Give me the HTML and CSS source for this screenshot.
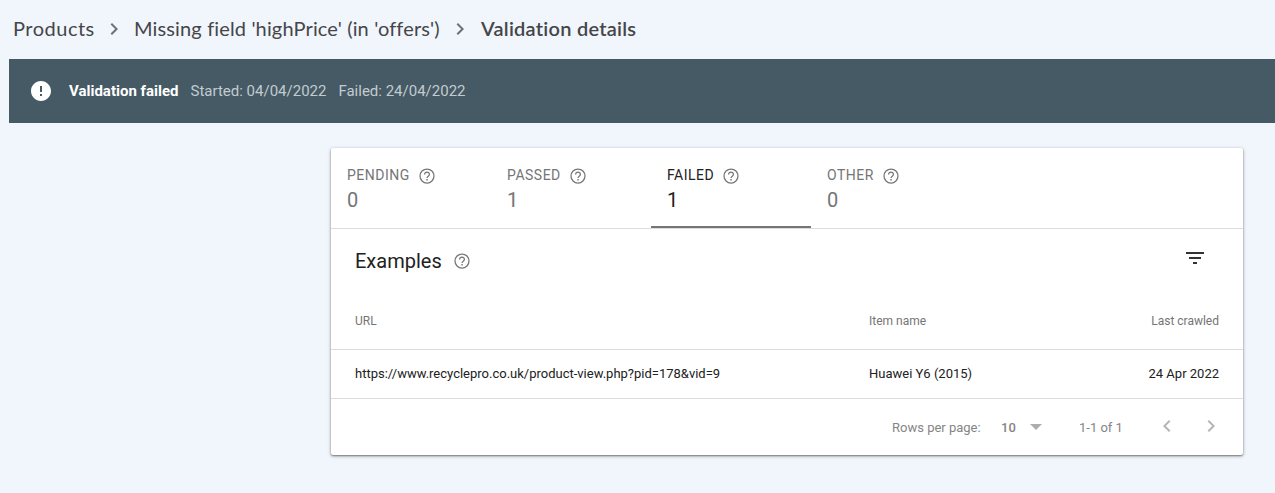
FILE: index.html
```
<!DOCTYPE html>
<html lang="en">
<head>
<meta charset="utf-8">
<title>Validation details</title>
<link rel="stylesheet" href="styles.css">
</head>
<body>
<svg class="defs" width="0" height="0" aria-hidden="true">
  <symbol id="help" viewBox="0 0 18 18"><g fill="none" stroke="currentColor" stroke-width="1.25"><circle cx="9" cy="9" r="7"/><path d="M6.600 7.500a2.400 2.400 0 1 1 4.800 0c0 1.700-2.400 1.700-2.400 3.600"/></g><path d="M8.300 12h1.400v1.400H8.300z"/></symbol>
  <symbol id="right" viewBox="0 0 24 24"><path d="M10 6L8.590 7.410 13.170 12l-4.580 4.590L10 18l6-6z"/></symbol>
  <symbol id="left" viewBox="0 0 24 24"><path d="M15.410 7.410L14 6l-6 6 6 6 1.410-1.410L10.830 12z"/></symbol>
</svg>
<nav class="crumbs">
  <span class="crumb crumb-root">Products</span>
  <svg class="sep"><use href="#right"/></svg>
  <span class="crumb crumb-issue">Missing field 'highPrice' (in 'offers')</span>
  <svg class="sep"><use href="#right"/></svg>
  <span class="crumb crumb-current">Validation details</span>
</nav>
<section class="banner">
  <svg class="alert" viewBox="0 0 24 24"><path d="M12 2C6.480 2 2 6.480 2 12s4.480 10 10 10 10-4.480 10-10S17.520 2 12 2zm1 15h-2v-2h2v2zm0-4h-2V7h2v6z"/></svg>
  <strong>Validation failed</strong>
  <span>Started: 04/04/2022</span>
  <span>Failed: 24/04/2022</span>
</section>
<main class="card">
  <div class="tabs">
    <div class="tab"><div class="label"><span>PENDING</span><svg class="help"><use href="#help"/></svg></div><div class="count">0</div></div>
    <div class="tab"><div class="label"><span>PASSED</span><svg class="help"><use href="#help"/></svg></div><div class="count">1</div></div>
    <div class="tab active"><div class="label"><span>FAILED</span><svg class="help"><use href="#help"/></svg></div><div class="count">1</div></div>
    <div class="tab"><div class="label"><span>OTHER</span><svg class="help"><use href="#help"/></svg></div><div class="count">0</div></div>
  </div>
  <header class="title">
    <h2>Examples</h2><svg class="help"><use href="#help"/></svg>
    <svg class="filter" viewBox="0 0 24 24"><path d="M10 18h4v-2h-4v2zM3 6v2h18V6H3zm3 7h12v-2H6v2z"/></svg>
  </header>
  <div class="row head"><span>URL</span><span>Item name</span><span class="date">Last crawled</span></div>
  <div class="row data"><span class="url">https://www.recyclepro.co.uk/product-view.php?pid=178&amp;vid=9</span><span class="name">Huawei Y6 (2015)</span><span class="date">24 Apr 2022</span></div>
  <footer class="pager">
    <span class="per-page">Rows per page:</span>
    <span class="size">10</span>
    <svg class="caret" viewBox="0 0 12 6"><path d="M0 0h12L6 6z"/></svg>
    <span class="range">1-1 of 1</span>
    <svg class="page prev"><use href="#left"/></svg>
    <svg class="page"><use href="#right"/></svg>
  </footer>
</main>
</body>
</html>
```
FILE: styles.css
```
* { box-sizing: border-box; }
body { margin: 0; height: 493px; overflow: hidden; background: #f1f5fc; font-family: Roboto, sans-serif; color: #212121; }
svg { display: block; flex: none; fill: currentColor; }
.defs { position: absolute; }
.crumbs { display: flex; align-items: center; height: 59px; padding: 0 0 4px 13px; font-family: Lato, sans-serif; font-size: 20px; color: #444649; white-space: nowrap; }
.crumb-root { width: 81px; letter-spacing: .5px; }
.crumb-issue { width: 306px; letter-spacing: .14px; }
.crumb-current { margin-left: 1px; font-weight: 600; letter-spacing: .25px; }
.sep { width: 24px; height: 24px; margin: 3px 8px 0; color: #6d7074; }
.banner { display: flex; align-items: center; gap: 12px; height: 64px; margin-left: 9px; padding-left: 20px; background: #455a64; color: #c3cbd0; font-size: 15px; }
.banner strong { color: #fff; font-weight: 700; margin-left: 4px; width: 109.5px; white-space: nowrap; }
.banner span { white-space: nowrap; }
.alert { width: 24px; height: 24px; color: #fff; }
.card { width: 912px; height: 307px; margin: 25px 0 0 331px; background: #fff; border-radius: 2px; box-shadow: 0 1px 2px rgba(0,0,0,.45), 0 1px 4px rgba(0,0,0,.2); }
.tabs { display: flex; height: 81px; border-bottom: 1px solid #dcdcdc; }
.tab { width: 160px; padding: 17px 16px 0; color: #757575; }
.active { color: #212121; border-bottom: 2px solid #757575; }
.label { display: flex; align-items: center; gap: 8px; height: 19px; font-size: 14px; letter-spacing: .5px; }
.help { width: 18px; height: 18px; color: #757575; margin-top: 2px; }
.count { font-size: 20px; line-height: 24px; margin-top: 4px; }
.title { display: flex; align-items: center; height: 64px; padding: 0 36px 0 24px; }
.title h2 { margin: 0; font-size: 20px; font-weight: 400; }
.title .help { margin-left: 11px; margin-top: 0; }
.filter { width: 24px; height: 24px; margin: -6px 0 0 auto; color: #333; }
.row { display: grid; grid-template-columns: 514px 1fr auto; align-items: center; padding: 0 24px; border-bottom: 1px solid #dcdcdc; }
.head { height: 57px; font-size: 12px; color: #757575; }
.data { height: 49px; padding-bottom: 2px; font-size: 13px; }
.pager { display: flex; align-items: center; height: 56px; padding-left: 561px; font-size: 13px; color: #858585; white-space: nowrap; }
.per-page { width: 109px; }
.size { width: 29px; font-weight: 500; }
.caret { width: 12px; height: 6px; color: #adadad; }
.range { width: 76px; margin-left: 37px; }
.page { width: 24px; height: 24px; margin-top: -2px; color: #b5b5b5; }
.prev { margin-right: 20px; }
```
